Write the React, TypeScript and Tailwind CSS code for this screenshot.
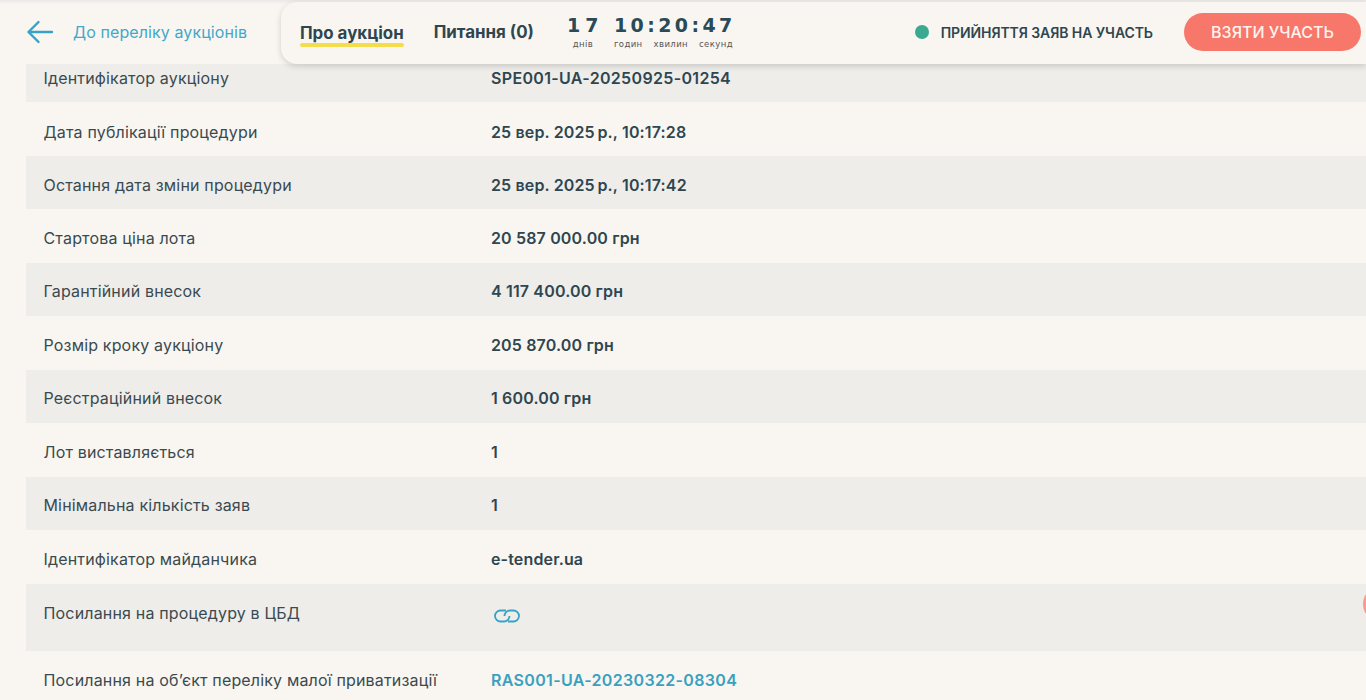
import React from 'react';

const rows = [
  { label: 'Дата публікації процедури', value: '25 вер. 2025\u202Fр., 10:17:28', h: 'h-[54px]', pt: 'pt-[20px]' },
  { label: 'Остання дата зміни процедури', value: '25 вер. 2025\u202Fр., 10:17:42', h: 'h-[53px]', pt: 'pt-[19px]' },
  { label: 'Стартова ціна лота', value: '20 587 000.00 грн', h: 'h-[54px]', pt: 'pt-[19px]' },
  { label: 'Гарантійний внесок', value: '4 117 400.00 грн', h: 'h-[53px]', pt: 'pt-[18px]' },
  { label: 'Розмір кроку аукціону', value: '205 870.00 грн', h: 'h-[54px]', pt: 'pt-[19px]' },
  { label: 'Реєстраційний внесок', value: '1 600.00 грн', h: 'h-[53px]', pt: 'pt-[18px]' },
  { label: 'Лот виставляється', value: '1', h: 'h-[54px]', pt: 'pt-[19px]' },
  { label: 'Мінімальна кількість заяв', value: '1', h: 'h-[53px]', pt: 'pt-[18px]' },
  { label: 'Ідентифікатор майданчика', value: 'e-tender.ua', h: 'h-[54px]', pt: 'pt-[19px]' },
];

const labelCls = 'w-[447.5px] text-[16px] leading-[20px] tracking-[0.17px] text-[#3a4a50]';
const valueCls = 'text-[16px] leading-[20px] font-semibold tracking-[0.15px] text-[#2f4650]';

const Row = ({ label, value, h, pt, odd }: { label: string; value: string; h: string; pt: string; odd: boolean }) => (
  <div className={`flex pl-[17.5px] ${pt} ${h} ${odd ? 'bg-[#eeedea]' : ''}`}>
    <div className={labelCls}>{label}</div>
    <div className={valueCls}>{value}</div>
  </div>
);

export default function App() {
  return (
    <div className="relative h-[700px] overflow-hidden bg-[#f9f6f1] font-['Inter',sans-serif]">
      <header className="relative z-10 flex h-[64px] items-start bg-gradient-to-b from-[#e9e8e6] to-[#f9f6f1] to-[4px] pt-[2px]">
        <div className="flex h-[62px] w-[281px] items-center pb-[2px] pl-[26px]">
          <svg width="28" height="24" viewBox="0 0 28 24" fill="none" stroke="#36a3c6" strokeWidth="2.4" strokeLinecap="round" strokeLinejoin="round">
            <path d="M26 12H3" />
            <path d="M12.5 2 2.5 12l10 10" />
          </svg>
          <span className="ml-[19px] text-[16px] tracking-[0.1px] text-[#3fa9c9]">До переліку аукціонів</span>
        </div>
        <div className="flex h-[62px] flex-1 items-center rounded-l-2xl bg-[#f9f6f1] pb-[2px] pl-[19px] shadow-[0_2px_6px_rgba(0,0,0,0.16)]">
          <div className="flex flex-col pt-[4px] pb-[1px]">
            <span className="text-[16.9px] leading-[24px] font-bold text-[#2f4650]">Про аукціон</span>
            <span className="-mt-[2px] h-[4px] rounded bg-[#f5dc4a]"></span>
          </div>
          <span className="mt-[2px] ml-[30px] text-[16.9px] font-bold text-[#2f4650]">Питання (0)</span>
          <div className="ml-[33px] flex items-start font-['DejaVu_Sans',sans-serif]">
            <div className="flex w-[32px] flex-col">
              <div className="mb-[4px] text-[19px] leading-[20px] font-bold tracking-[5px] text-[#2b4a57]">17</div>
              <div className="text-center text-[8.5px] leading-[10px] tracking-[0.4px] text-[#555]">днів</div>
            </div>
            <div className="ml-[15px] flex flex-col">
              <div className="mb-[4px] text-[19px] leading-[20px] font-bold tracking-[3.4px] text-[#2b4a57]">10:20:47</div>
              <div className="flex gap-[11px] text-[8.5px] leading-[10px] tracking-[0.4px] text-[#555]">
                <span>годин</span>
                <span>хвилин</span>
                <span>секунд</span>
              </div>
            </div>
          </div>
          <span className="ml-auto h-[14px] w-[14px] rounded-full bg-[#3ba98f]"></span>
          <span className="ml-[12px] text-[14px] font-semibold tracking-[-0.08px] text-[#2f4650]">ПРИЙНЯТТЯ ЗАЯВ НА УЧАСТЬ</span>
          <button className="mr-[5px] ml-[31px] h-[38px] w-[177px] rounded-full bg-[#f7776a] text-[16px] font-medium text-[#fdf3ee]">
            ВЗЯТИ УЧАСТЬ
          </button>
        </div>
      </header>

      <main className="ml-[26px]">
        <div className="flex h-[38px] bg-[#eeedea] pt-[4px] pl-[17.5px]">
          <div className={labelCls}>Ідентифікатор аукціону</div>
          <div className={`${valueCls} tracking-[0.33px]`}>SPE001-UA-20250925-01254</div>
        </div>
        {rows.map((r, i) => (
          <Row key={r.label} label={r.label} value={r.value} h={r.h} pt={r.pt} odd={i % 2 === 1} />
        ))}
        <div className="flex h-[67px] bg-[#eeedea] pt-[19px] pl-[17.5px]">
          <div className={labelCls}>Посилання на процедуру в ЦБД</div>
          <svg width="26" height="14" viewBox="0 0 26 14" fill="none" stroke="#36a3c6" strokeWidth="1.8" className="mt-[6px] ml-[3px]">
            <path d="M12 1.500H6.500a5.500 5.500 0 0 0 0 11H10a5.500 5.500 0 0 0 5.500-5.500" />
            <path d="M14 12.500h5.500a5.500 5.500 0 0 0 0-11H16A5.500 5.500 0 0 0 10.500 7" />
          </svg>
        </div>
        <div className="flex pt-[19px] pl-[17.5px]">
          <div className={labelCls}>Посилання на обʼєкт переліку малої приватизації</div>
          <div className={`${valueCls} tracking-[0.33px] !text-[#3aa0c0]`}>RAS001-UA-20230322-08304</div>
        </div>
      </main>

      <span className="absolute top-[586px] left-[1363px] h-[36px] w-[36px] rounded-full bg-[#f99a91]"></span>
    </div>
  );
}
